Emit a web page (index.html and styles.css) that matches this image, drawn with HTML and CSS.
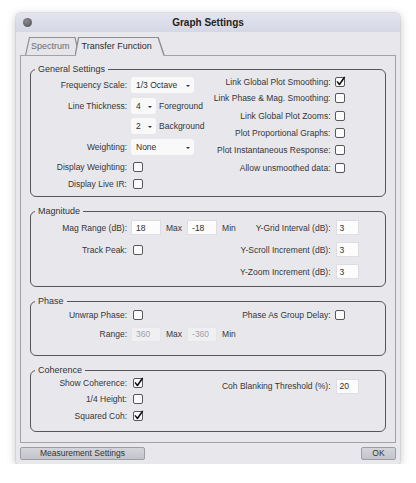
FILE: index.html
```html
<!DOCTYPE html>
<html>
<head>
<meta charset="utf-8">
<title>Graph Settings</title>
<link rel="stylesheet" href="styles.css">
</head>
<body>
<div class="window">
  <div class="titlebar">
    <span class="close"></span>
    <span class="title">Graph Settings</span>
    <span></span>
  </div>
  <div class="tabs">
    <div class="tab">Spectrum</div>
    <div class="tab active">Transfer Function</div>
  </div>
  <div class="panel">
    <fieldset class="group g-general">
      <legend>General Settings</legend>
      <div class="body">
        <div class="left">
          <span class="lbl">Frequency Scale:</span>
          <div class="ctl"><span class="sel wide">1/3 Octave<i class="arrow"></i></span></div>
          <span class="lbl">Line Thickness:</span>
          <div class="ctl"><span class="sel narrow">4<i class="arrow"></i></span><span>Foreground</span></div>
          <span class="lbl"></span>
          <div class="ctl"><span class="sel narrow">2<i class="arrow"></i></span><span>Background</span></div>
          <span class="lbl">Weighting:</span>
          <div class="ctl"><span class="sel wide">None<i class="arrow"></i></span></div>
          <span class="lbl">Display Weighting:</span>
          <div class="ctl"><span class="cb"></span></div>
          <span class="lbl">Display Live IR:</span>
          <div class="ctl"><span class="cb"></span></div>
        </div>
        <div class="right">
          <span class="lbl">Link Global Plot Smoothing:</span>
          <div class="ctl"><span class="cb"><svg class="check" viewBox="0 0 12 12"><path d="M2.6 6.4 L4.8 9.2 L10.2 1.6"/></svg></span></div>
          <span class="lbl">Link Phase &amp; Mag. Smoothing:</span>
          <div class="ctl"><span class="cb"></span></div>
          <span class="lbl">Link Global Plot Zooms:</span>
          <div class="ctl"><span class="cb"></span></div>
          <span class="lbl">Plot Proportional Graphs:</span>
          <div class="ctl"><span class="cb"></span></div>
          <span class="lbl">Plot Instantaneous Response:</span>
          <div class="ctl"><span class="cb"></span></div>
          <span class="lbl">Allow unsmoothed data:</span>
          <div class="ctl"><span class="cb"></span></div>
        </div>
      </div>
    </fieldset>

    <fieldset class="group g-mag">
      <legend>Magnitude</legend>
      <div class="body">
        <div class="left">
          <span class="lbl">Mag Range (dB):</span>
          <div class="ctl wide-gap"><span class="fld">18</span><span>Max</span><span class="fld">-18</span><span>Min</span></div>
          <span class="lbl">Track Peak:</span>
          <div class="ctl"><span class="cb"></span></div>
        </div>
        <div class="right">
          <span class="lbl">Y-Grid Interval (dB):</span>
          <div class="ctl"><span class="fld sm">3</span></div>
          <span class="lbl">Y-Scroll Increment (dB):</span>
          <div class="ctl"><span class="fld sm">3</span></div>
          <span class="lbl">Y-Zoom Increment (dB):</span>
          <div class="ctl"><span class="fld sm">3</span></div>
        </div>
      </div>
    </fieldset>

    <fieldset class="group g-phase">
      <legend>Phase</legend>
      <div class="body">
        <div class="left">
          <span class="lbl">Unwrap Phase:</span>
          <div class="ctl"><span class="cb"></span></div>
          <span class="lbl">Range:</span>
          <div class="ctl wide-gap"><span class="fld dis">360</span><span>Max</span><span class="fld dis">-360</span><span>Min</span></div>
        </div>
        <div class="right">
          <span class="lbl">Phase As Group Delay:</span>
          <div class="ctl"><span class="cb"></span></div>
        </div>
      </div>
    </fieldset>

    <fieldset class="group g-coh">
      <legend>Coherence</legend>
      <div class="body">
        <div class="left">
          <span class="lbl">Show Coherence:</span>
          <div class="ctl"><span class="cb"><svg class="check" viewBox="0 0 12 12"><path d="M2.6 6.4 L4.8 9.2 L10.2 1.6"/></svg></span></div>
          <span class="lbl">1/4 Height:</span>
          <div class="ctl"><span class="cb"></span></div>
          <span class="lbl">Squared Coh:</span>
          <div class="ctl"><span class="cb"><svg class="check" viewBox="0 0 12 12"><path d="M2.6 6.4 L4.8 9.2 L10.2 1.6"/></svg></span></div>
        </div>
        <div class="right">
          <span class="lbl">Coh Blanking Threshold (%):</span>
          <div class="ctl"><span class="fld sm">20</span></div>
        </div>
      </div>
    </fieldset>
  </div>
  <div class="footer">
    <button class="btn btn-wide">Measurement Settings</button>
    <button class="btn btn-ok">OK</button>
  </div>
</div>
</body>
</html>
```

FILE: styles.css
```css
html, body {
  margin: 0;
  background: #ffffff;
}

body {
  font-family: "Liberation Sans", Arial, sans-serif;
  font-size: 8.5px;
  color: #353538;
}

.window {
  margin: 13px 0 0 16px;
  width: 384px;
  height: 451px;
  background: #e8e8ec;
  border-radius: 4px 4px 2px 2px;
  box-shadow: 0 2px 10px rgba(0, 0, 0, 0.25), 0 0 0 0.5px rgba(0, 0, 0, 0.12);
  display: flex;
  flex-direction: column;
}

.titlebar {
  height: 19px;
  display: grid;
  grid-template-columns: 1fr auto 1fr;
  align-items: center;
  background: linear-gradient(#e3e4ee, #d5d7e6);
  border-radius: 4px 4px 0 0;
}

.close {
  width: 9px;
  height: 9px;
  margin-left: 6.5px;
  border-radius: 50%;
  background: radial-gradient(circle at 40% 35%, #8c8c90, #4c4c50);
}

.title {
  font-weight: bold;
  font-size: 10px;
  color: #222;
}

.tabs {
  display: flex;
  height: 18px;
  margin: 5px 0 0 9px;
  position: relative;
  z-index: 1;
}

.tab {
  position: relative;
  z-index: 0;
  height: 18px;
  line-height: 18px;
  font-size: 9px;
  color: #6a6a6e;
  padding: 0 10px 0 6px;
}

.tab::before {
  content: "";
  position: absolute;
  inset: 0;
  background: #8e8e93;
  clip-path: polygon(0 100%, 4px 0, calc(100% - 4px) 0, 100% 100%);
  z-index: -1;
}

.tab::after {
  content: "";
  position: absolute;
  inset: 1px 1.2px 0 1.2px;
  background: #e6e6ea;
  clip-path: polygon(0 100%, 3.8px 0, calc(100% - 3.8px) 0, 100% 100%);
  z-index: -1;
}

.tab.active {
  z-index: 1;
  color: #2a2a2d;
  margin-left: -5px;
  padding: 0 13px 0 7px;
}

.tab.active::before {
  clip-path: polygon(0 100%, 3.5px 0, calc(100% - 6px) 0, 100% 100%);
}

.tab.active::after {
  bottom: -1px;
  background: #e8e8ec;
  clip-path: polygon(0 100%, 3.5px 0, calc(100% - 6px) 0, 100% 100%);
}

.panel {
  margin: 0 4px;
  height: 388px;
  box-sizing: border-box;
  border: 1px solid #a2a2a7;
  padding: 7.5px 9px 0;
  display: flex;
  flex-direction: column;
  gap: 9px;
}

.group {
  margin: 0;
  padding: 0;
  min-width: 0;
  border: 1.5px solid #56565a;
  border-radius: 6px;
}

.group legend {
  font-size: 9px;
  line-height: 11px;
  padding: 0 3px;
  margin-left: 4px;
  color: #333;
}

.body {
  display: flex;
}

.g-general .body { height: 121px; }
.g-mag .body { height: 69px; }
.g-phase .body { height: 48px; }
.g-coh .body { height: 55px; }

.left {
  display: grid;
  grid-template-columns: 96px auto;
  column-gap: 4px;
  align-items: center;
  align-content: start;
}

.right {
  margin-left: auto;
  display: grid;
  grid-template-columns: auto 50.5px;
  column-gap: 4px;
  align-items: center;
  align-content: start;
}

.g-general .left { grid-template-rows: 21px 20px 21px 21px 18px 17px; }
.g-general .right { grid-template-rows: 15px repeat(5, 17.4px); }
.g-mag .left { grid-template-rows: 22px 22px; }
.g-mag .right { grid-template-rows: 22px 22px 22px; }
.g-phase .left { grid-template-rows: 17px 21px; }
.g-phase .right { grid-template-rows: 17px; }
.g-coh .left { grid-template-rows: 15px 17px 17px; }
.g-coh .right { grid-template-rows: 21px; }

.lbl {
  text-align: right;
  white-space: nowrap;
}

.ctl {
  display: flex;
  align-items: center;
  gap: 3px;
  white-space: nowrap;
}

.ctl.wide-gap {
  gap: 5px;
}

.sel {
  display: flex;
  align-items: center;
  justify-content: space-between;
  box-sizing: border-box;
  height: 16px;
  padding: 0 4px 0 5px;
  background: #f9f9fa;
  border-radius: 3px;
  color: #2e2e31;
}

.sel.wide { width: 63px; }
.sel.narrow { width: 25px; }

.arrow {
  width: 0;
  height: 0;
  margin-top: 2px;
  border-left: 2.2px solid transparent;
  border-right: 2.2px solid transparent;
  border-top: 2.8px solid #333;
}

.cb {
  position: relative;
  width: 10px;
  height: 10px;
  box-sizing: border-box;
  border: 1px solid #58585c;
  border-radius: 2px;
  background: #fdfdfd;
}

.left .cb {
  margin-left: 1.5px;
}

.check {
  position: absolute;
  left: -0.5px;
  top: -2.5px;
  width: 11px;
  height: 11px;
  overflow: visible;
}

.check path {
  fill: none;
  stroke: #111;
  stroke-width: 1.7;
  stroke-linecap: round;
  stroke-linejoin: round;
}

.fld {
  display: flex;
  align-items: center;
  box-sizing: border-box;
  width: 30px;
  height: 15px;
  padding-left: 4px;
  background: #fcfcfd;
  border: 1px solid #dedee2;
  color: #2e2e31;
}

.fld.sm {
  width: 23px;
  padding-left: 3px;
}

.right .fld {
  margin-left: 1px;
}

.fld.dis {
  background: #f0f0f3;
  border-color: #e6e6e9;
  color: #a0a0a4;
}

.footer {
  display: flex;
  justify-content: space-between;
  margin: 4px 4px 0;
}

.btn {
  height: 13px;
  box-sizing: border-box;
  margin: 0;
  padding: 0;
  border: 1px solid #9d9ea4;
  border-radius: 2px;
  background: linear-gradient(#d4d5db, #c3c4cb);
  font-family: "Liberation Sans", Arial, sans-serif;
  font-size: 8.5px;
  color: #333;
  line-height: 11px;
}

.btn-wide { width: 125px; }
.btn-ok { width: 35px; }
```
